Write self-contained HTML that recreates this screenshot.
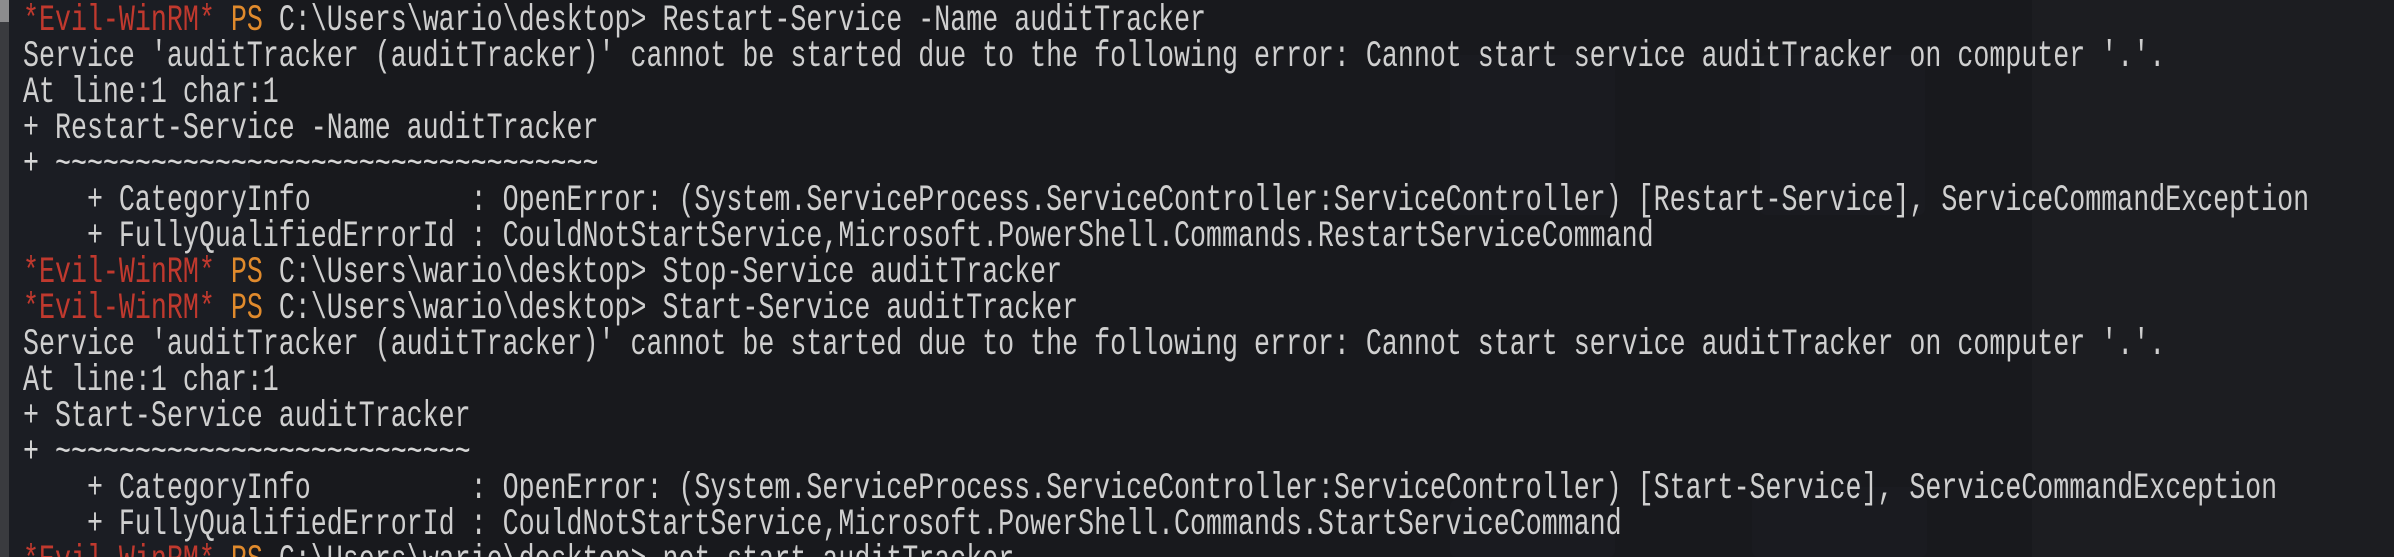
<!DOCTYPE html>
<html><head><meta charset="utf-8"><style>
html,body{margin:0;padding:0;width:2394px;height:557px;overflow:hidden}
body{background:#18191d;position:relative;font-family:"Liberation Mono",monospace}
.bgl{position:absolute;left:0;top:0;width:250px;height:557px;background:#1b1d23}
.bgr{position:absolute;left:2032px;top:0;width:362px;height:557px;background:#1c1d21}
.strip{position:absolute;left:0;top:0;width:9px;height:557px;background:#3a3b3f}
.strip2{position:absolute;left:0;top:0;width:9px;height:22px;background:#8c8c8e}
.box{position:absolute;background:#1a1b20;border-radius:6px}
.term{position:absolute;left:23px;top:3px;width:2371px;height:554px;overflow:hidden}
.l{height:36px;line-height:36px;font-size:37px;white-space:pre;color:#cfcfcf;transform:scaleX(0.72);transform-origin:0 50%;width:3300px}
.r{color:#c0392e}.o{color:#e08a2c}.t{color:#d6d6d6}
</style></head><body>
<div class="bgl"></div><div class="bgr"></div>
<div class="box" style="left:1450px;top:55px;width:165px;height:160px"></div>
<div class="box" style="left:1760px;top:55px;width:165px;height:160px"></div>
<div class="box" style="left:1450px;top:500px;width:165px;height:57px"></div>
<div class="box" style="left:1752px;top:487px;width:175px;height:70px"></div>
<div class="strip"></div><div class="strip2"></div>
<div class="term">
<div class="l"><span class="r">*Evil-WinRM*</span> <span class="o">PS</span> C:\Users\wario\desktop&gt; Restart-Service -Name auditTracker</div>
<div class="l">Service 'auditTracker (auditTracker)' cannot be started due to the following error: Cannot start service auditTracker on computer '.'.</div>
<div class="l">At line:1 char:1</div>
<div class="l">+ Restart-Service -Name auditTracker</div>
<div class="l t">+ ~~~~~~~~~~~~~~~~~~~~~~~~~~~~~~~~~~</div>
<div class="l">    + CategoryInfo          : OpenError: (System.ServiceProcess.ServiceController:ServiceController) [Restart-Service], ServiceCommandException</div>
<div class="l">    + FullyQualifiedErrorId : CouldNotStartService,Microsoft.PowerShell.Commands.RestartServiceCommand</div>
<div class="l"><span class="r">*Evil-WinRM*</span> <span class="o">PS</span> C:\Users\wario\desktop&gt; Stop-Service auditTracker</div>
<div class="l"><span class="r">*Evil-WinRM*</span> <span class="o">PS</span> C:\Users\wario\desktop&gt; Start-Service auditTracker</div>
<div class="l">Service 'auditTracker (auditTracker)' cannot be started due to the following error: Cannot start service auditTracker on computer '.'.</div>
<div class="l">At line:1 char:1</div>
<div class="l">+ Start-Service auditTracker</div>
<div class="l t">+ ~~~~~~~~~~~~~~~~~~~~~~~~~~</div>
<div class="l">    + CategoryInfo          : OpenError: (System.ServiceProcess.ServiceController:ServiceController) [Start-Service], ServiceCommandException</div>
<div class="l">    + FullyQualifiedErrorId : CouldNotStartService,Microsoft.PowerShell.Commands.StartServiceCommand</div>
<div class="l"><span class="r">*Evil-WinRM*</span> <span class="o">PS</span> C:\Users\wario\desktop&gt; net start auditTracker</div>
</div>
</body></html>
